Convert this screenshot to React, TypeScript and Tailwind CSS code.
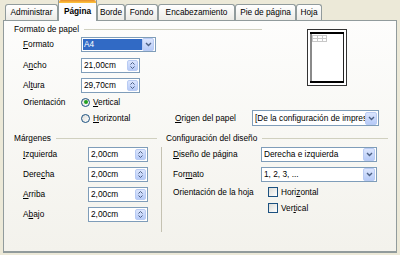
import React from "react";

const Tab = ({ label, w, active }: { label: string; w: string; active?: boolean }) => {
  if (active) {
    return (
      <div className={`relative z-10 -mb-px flex h-[21px] flex-col border-x border-[#919b9c] bg-[#fcfcfe] font-bold ${w}`}>
        <div className="h-[3px] rounded-t-[2px] bg-linear-to-b from-[#e68b2c] to-[#ffc73c]" />
        <div className="flex flex-1 items-center justify-center pb-[2px]">{label}</div>
      </div>
    );
  }
  return (
    <div className={`flex h-[16px] items-center justify-center rounded-t-[3px] border border-b-0 border-[#919b9c] bg-linear-to-b from-white to-[#ecebe6] ${w}`}>
      {label}
    </div>
  );
};

const Chevron = () => (
  <svg width="7" height="5" viewBox="0 0 7 5">
    <path d="M1 1 L3.5 3.5 L6 1" fill="none" stroke="#4d6185" strokeWidth="1.4" />
  </svg>
);

const DropBtn = () => (
  <div className="mr-px flex h-[13px] w-[12px] items-center justify-center rounded-[2px] border border-[#b9cbf3] bg-linear-to-b from-[#dbe5fd] to-[#b7cbf8]">
    <Chevron />
  </div>
);

const Dropdown = ({ value, w, h = "h-[15px]", selected }: { value: string; w: string; h?: string; selected?: boolean }) => (
  <div className={`flex items-center border border-[#7f9db9] bg-white ${w} ${h}`}>
    <div className={`ml-px flex h-[11px] flex-1 items-center overflow-hidden whitespace-nowrap pl-[1px] ${selected ? "bg-[#316ac5] text-white" : ""}`}>
      {value}
    </div>
    <DropBtn />
  </div>
);

const SpinInput = ({ value, w }: { value: string; w: string }) => (
  <div className={`flex h-[15px] items-center border border-[#7f9db9] bg-white ${w}`}>
    <div className="flex-1 pl-[2px]">{value}</div>
    <div className="mr-px flex h-[11px] w-[11px] flex-col items-center justify-center gap-px rounded-[2px] border border-[#b9cbf3] bg-linear-to-b from-[#dbe5fd] to-[#b7cbf8]">
      <svg width="5" height="3" viewBox="0 0 5 3">
        <path d="M0.5 2.5 L2.5 0.5 L4.5 2.5" fill="none" stroke="#4d6185" strokeWidth="1" />
      </svg>
      <svg width="5" height="3" viewBox="0 0 5 3">
        <path d="M0.5 0.5 L2.5 2.5 L4.5 0.5" fill="none" stroke="#4d6185" strokeWidth="1" />
      </svg>
    </div>
  </div>
);

const Radio = ({ checked }: { checked?: boolean }) => (
  <div className="flex h-[9px] w-[9px] items-center justify-center rounded-full border border-[#1c5180] bg-linear-to-br from-[#dcdcd7] to-white">
    {checked && <div className="h-[4px] w-[4px] rounded-full bg-[#21a121]" />}
  </div>
);

const Check = () => (
  <div className="h-[10px] w-[10px] border border-[#1c5180] bg-linear-to-br from-[#dcdcd7] to-white" />
);

const Preview = () => (
  <svg width="40" height="57" viewBox="0 0 40 57">
    <rect x="0.5" y="0.5" width="39" height="56" fill="#fff" stroke="#333" />
    <rect x="3" y="3" width="34" height="51" fill="#fff" />
    <g stroke="#c8c8c8" strokeWidth="1">
      <line x1="5" y1="6.5" x2="20" y2="6.5" />
      <line x1="5" y1="9.5" x2="20" y2="9.5" />
      <line x1="5" y1="12.5" x2="20" y2="12.5" />
      <line x1="5.5" y1="6" x2="5.5" y2="13" />
      <line x1="10.5" y1="6" x2="10.5" y2="13" />
      <line x1="15.5" y1="6" x2="15.5" y2="13" />
      <line x1="19.5" y1="6" x2="19.5" y2="13" />
    </g>
    <rect x="3" y="3" width="34" height="2" fill="#000" />
    <rect x="3" y="52" width="34" height="2" fill="#000" />
    <rect x="3" y="5" width="2" height="47" fill="#8a8a8a" />
    <rect x="36" y="5" width="1" height="47" fill="#222" />
  </svg>
);

const GroupHeader = ({ title }: { title: string }) => (
  <div className="flex h-[14px] items-center">
    <span className="whitespace-nowrap">{title}</span>
    <div className="ml-[5px] h-px flex-1 bg-[#d0d0bf]" />
  </div>
);

export default function App() {
  return (
    <div className="h-[255px] w-[400px] overflow-hidden bg-[#ece9d8] font-['Liberation_Sans',Arial,sans-serif] text-[8.3px] leading-none text-black">
      <div className="flex h-[20px] items-end pl-[5px]">
        <Tab label="Administrar" w="w-[53px]" />
        <Tab label="Página" w="w-[39px]" active />
        <Tab label="Borde" w="w-[28px]" />
        <Tab label="Fondo" w="w-[33px]" />
        <Tab label="Encabezamiento" w="w-[77px]" />
        <Tab label="Pie de página" w="w-[61px]" />
        <Tab label="Hoja" w="w-[26px]" />
      </div>

      <div className="mx-[3px] h-[233px] border border-b-2 border-[#919b9c] bg-linear-to-b from-[#fdfdfc] to-[#f3f2ec] pl-[10px]">
        <div className="mt-[1px] flex">
          <div className="flex w-[248px] flex-col">
            <GroupHeader title="Formato de papel" />
            <div className="mt-[1px] flex h-[15px] items-center">
              <div className="w-[67px] pl-[9px]"><u>F</u>ormato</div>
              <Dropdown value="A4" w="w-[75px]" selected />
            </div>
            <div className="mt-[6px] flex h-[15px] items-center">
              <div className="w-[67px] pl-[9px]">A<u>n</u>cho</div>
              <SpinInput value="21,00cm" w="w-[59px]" />
            </div>
            <div className="mt-[5px] flex h-[15px] items-center">
              <div className="w-[67px] pl-[9px]">Al<u>t</u>ura</div>
              <SpinInput value="29,70cm" w="w-[59px]" />
            </div>
            <div className="mt-[2px] flex h-[14px] items-center">
              <div className="w-[67px] pl-[9px]">Orientación</div>
              <Radio checked />
              <span className="ml-[3px]"><u>V</u>ertical</span>
            </div>
          </div>
          <div className="ml-[45px] mt-[7px]">
            <Preview />
          </div>
        </div>

        <div className="mt-[1px] flex h-[16px] items-center">
          <div className="w-[67px]" />
          <div className="flex w-[94px] items-center">
            <Radio />
            <span className="ml-[3px]"><u>H</u>orizontal</span>
          </div>
          <div className="w-[77px]"><u>O</u>rigen del papel</div>
          <Dropdown value="[De la configuración de impresora]" w="w-[127px]" h="h-[16px]" />
        </div>

        <div className="mt-[5px] flex">
          <div className="flex w-[143px] flex-col">
            <GroupHeader title="Márgenes" />
            {[
              [<><u>I</u>zquierda</>, "mt-[2px]"],
              [<>Dere<u>c</u>ha</>, "mt-[5px]"],
              [<><u>A</u>rriba</>, "mt-[5px]"],
              [<>A<u>b</u>ajo</>, "mt-[5px]"],
            ].map(([label, mt], i) => (
              <div key={i} className={`flex h-[15px] items-center ${mt}`}>
                <div className="w-[74px] pl-[9px]">{label}</div>
                <SpinInput value="2,00cm" w="w-[60px]" />
              </div>
            ))}
          </div>

          <div className="ml-[4px] flex w-[227px] flex-col">
            <div className="pl-[5px]">
              <GroupHeader title="Configuración del diseño" />
            </div>
            <div className="mt-[2px] flex">
              <div className="h-[85px] w-px bg-[#c5c2b2]" />
              <div className="flex flex-col pl-[11px]">
                <div className="flex h-[15px] items-center">
                  <div className="w-[88px]"><u>D</u>iseño de página</div>
                  <Dropdown value="Derecha e izquierda" w="w-[116px]" />
                </div>
                <div className="mt-[5px] flex h-[15px] items-center">
                  <div className="w-[88px]">For<u>m</u>ato</div>
                  <Dropdown value="1, 2, 3, ..." w="w-[116px]" />
                </div>
                <div className="mt-[3px] flex h-[14px] items-center">
                  <div className="w-[95px]">Orientación de la hoja</div>
                  <Check />
                  <span className="ml-[3px]">Hori<u>z</u>ontal</span>
                </div>
                <div className="mt-[3px] flex h-[12px] items-center pl-[95px]">
                  <Check />
                  <span className="ml-[3px]">Ver<u>t</u>ical</span>
                </div>
              </div>
            </div>
          </div>
        </div>
      </div>
    </div>
  );
}
